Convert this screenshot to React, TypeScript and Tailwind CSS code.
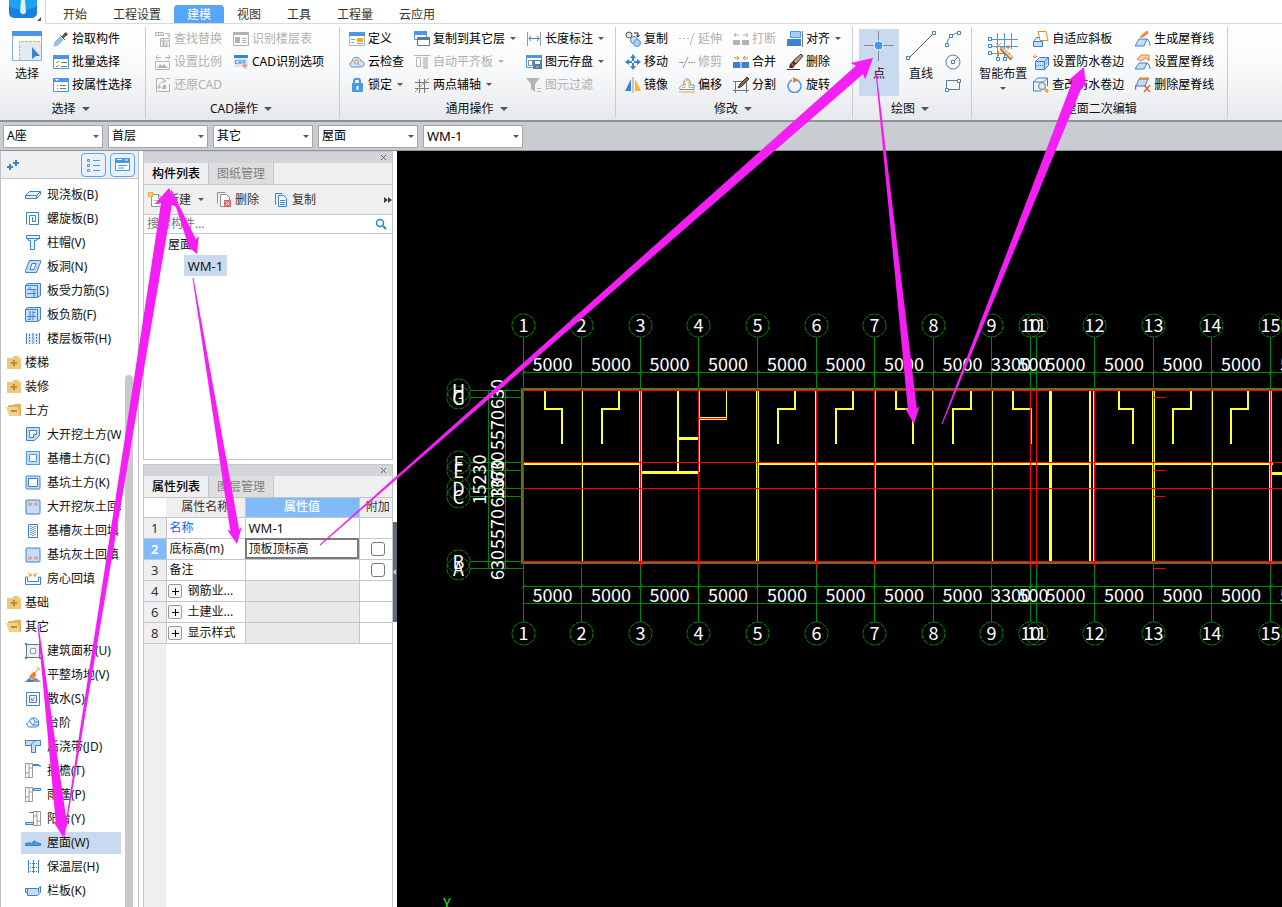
import { Fragment, useState } from 'react';
import type { ReactNode } from 'react';
import clsx from 'clsx';

const BLUE = '#3b82d0';
const SKY = '#4a96e8';
const PALE = '#c5dcf7';
const GRAY = '#b3b3b3';
const DARK = '#6b7885';
const ORANGE = '#f0842c';
const GREEN = '#008a00';
const YELLOW = '#ffff33';

const pitIcon = (marks: ReactNode) => (
  <>
    <rect x="1" y="1" width="14" height="14" rx="1" fill={PALE} stroke={BLUE} />
    {marks}
  </>
);

const icons: Record<string, ReactNode> = {
  // ribbon, select
  dropper: (
    <>
      <path d="M1 15l1-4 5-5 3 3-5 5z" fill="#8ec1f2" stroke="#9fb4c6" />
      <path d="M7 4l5 5M9 6l3-4c1-1 3 1 2 2l-4 3z" stroke="#555" fill="#555" />
    </>
  ),
  batch: (
    <>
      <path d="M.5 2h15v12.500H.5z" fill="#fff" stroke={SKY} />
      <path d="M0 1h16v4H0z" fill={SKY} />
      <path d="M3 8l1 1 2-2M3 12l1 1 2-2" stroke={ORANGE} />
      <path d="M8 8.500h6M8 12.500h6" stroke="#777" />
    </>
  ),
  property: (
    <>
      <path d="M.5 2h15v12.500H.5z" fill="#fff" stroke={SKY} />
      <path d="M0 1h16v4H0z" fill={SKY} />
      <path d="M2 2h4L4 4z" fill="#fff" />
      <path d="M4 8.500h1M4 11.500h1M7 8.500h6M7 11.500h6" stroke="#777" />
    </>
  ),
  // ribbon, CAD
  findReplace: (
    <>
      <path d="M.5 1.500h8v3h-8zM3.500 1.500v3M6 1.500v3M10 2.500h4v3M12.500 4l1.500 2 1.500-2" stroke={GRAY} />
      <path d="M5.500 7.500h9v8h-9zM5.500 10h9M7 12h6M7 14h6M8.500 7.500V15" stroke={GRAY} />
    </>
  ),
  scale: (
    <>
      <path d="M1 3.500h5M3 1L1 3.500 3 6M10 3.500h5M13 1l2 2.500L13 6" stroke={GRAY} />
      <path d="M.5 7.500h14v8H.5z" stroke={GRAY} />
      <path d="M2 14l3-4 2 2 2-2 4 4z" fill={GRAY} />
    </>
  ),
  restore: (
    <>
      <path d="M9 1.500H1.500v13h13V7" stroke={GRAY} />
      <path d="M4 11c0-5 3-7 6-7M8 2l3 2-3 2M2.500 9L4 11.500 6 9M11 1.500h4" stroke={GRAY} />
      <path d="M8 8h3v4H7z" fill={GRAY} />
    </>
  ),
  floorTable: (
    <>
      <path d="M.5 1.500h15v13H.5z" stroke={GRAY} />
      <path d="M0 1h16v3H0zM2 6h5v6H2z" fill={GRAY} />
      <path d="M9 7.500h5M9 9.500h4M9 11.500h5" stroke={GRAY} />
    </>
  ),
  cad: (
    <>
      <path d="M1 1h14v12H1z" fill="#d6e8fb" />
      <path d="M1 1h14v3H1z" fill={BLUE} />
      <path d="M4.500 6.500h-2v3h2M6 10V6.500h2V10M6 8.500h2M10 6.500h2v3h-2z" stroke={SKY} />
      <path d="M10 8l5 4-2 .5.500 2-1.500.500-1-2-1.500.500z" fill="#f69a78" />
    </>
  ),
  // ribbon, common
  define: (
    <>
      <path d="M.5 1.500h15v13H.5z" fill="#fff" stroke="#a8b4c0" />
      <path d="M0 1h16v4H0z" fill={SKY} />
      <path d="M2 8.500h4M2 11.500h3M8 12.500h6" stroke="#999" />
      <path d="M8 7h6v4H8z" fill="#f5a623" />
    </>
  ),
  cloud: (
    <>
      <path d="M4 13C0 13 0 8 3 8c0-6 8-6 9-1 4 0 4 6 0 6z" fill="#cfe3f9" stroke={SKY} />
      <circle cx="7.500" cy="8" r="2" stroke={ORANGE} />
      <path d="M9 9.500l2 2" stroke={ORANGE} />
    </>
  ),
  lock: (
    <>
      <path d="M5 7V4c0-3 6-3 6 0v3" stroke={SKY} strokeWidth="2" />
      <rect x="3" y="6" width="11" height="9" rx="1" fill={SKY} />
      <path d="M8.500 9v4" stroke="#fff" strokeWidth="2" />
    </>
  ),
  copyLayer: (
    <>
      <path d="M.5 .5h12v8H.5z" fill="#fff" stroke={SKY} />
      <path d="M0 0h13v4H0z" fill={SKY} />
      <path d="M3.500 6.500h12v8h-12z" fill="#fff" stroke={DARK} />
      <path d="M3 6h13v3H3z" fill={DARK} />
    </>
  ),
  alignSlab: (
    <>
      <path d="M0 1.500h16M2.500 3.500h4v9h-4z" stroke={GRAY} />
      <path d="M9 3h5v12H9z" fill="#ccc" />
    </>
  ),
  twoPoint: (
    <>
      <path d="M5.500 2v14M10.500 2v14M1 5.500h14M1 11.500h14" stroke={DARK} />
      <path d="M1 15L15 1" stroke={ORANGE} />
    </>
  ),
  length: (
    <>
      <path d="M1.500 1v14M14.500 1v14" stroke="#999" />
      <path d="M3 7.500h10M5 5L3 7.500 5 10M11 5l2 2.500-2 2.500" stroke={BLUE} />
    </>
  ),
  saveElement: (
    <>
      <path d="M.5 1.500h15v12H.5z" fill="#fff" stroke={SKY} />
      <path d="M0 1h16v3H0z" fill={SKY} />
      <path d="M2.500 6.500h4v5h-4z" stroke="#888" />
      <path d="M7 6h9v9H7z" fill={BLUE} />
      <path d="M9 7h5v3H9z" fill="#fff" />
      <path d="M10 12h3v2h-3z" fill={ORANGE} />
    </>
  ),
  filter: (
    <>
      <path d="M0 1h14L9 7v8l-4-3V7z" fill={GRAY} />
      <path d="M11 11.500h4M11 14.500h4" stroke={GRAY} />
    </>
  ),
  // ribbon, modify
  copy: (
    <>
      <circle cx="4" cy="4" r="3" fill="#e3e6ea" stroke="#555" />
      <circle cx="9" cy="9" r="3.500" fill="#cfe3f9" stroke={DARK} />
      <circle cx="12" cy="12" r="3.500" fill="#9fd3f7" stroke={SKY} />
      <path d="M9 2h4v3M11.500 4L13 6l1.500-2" stroke="#222" />
    </>
  ),
  move: (
    <path
      d="M8 0l3 4H9v3H7V4H5zM8 16l3-4H9V9H7v3H5zM0 8l4-3v2h3v2H4v2zM16 8l-4-3v2H9v2h3v2z"
      fill={BLUE}
    />
  ),
  mirror: (
    <>
      <path d="M6 2v12H0z" fill={BLUE} />
      <path d="M10 2v12h6z" fill="#fbb42c" />
      <path d="M8 0v16" stroke="#999" />
    </>
  ),
  extend: <path d="M0 7.500h2M4 7.500h2M8 7.500h2M11 14l4-12" stroke={GRAY} />,
  trim: <path d="M0 8.500h5M4 14L9 3M9 8.500h2M12 8.500h2M15 8.500h1" stroke="#999" />,
  offset: (
    <>
      <path d="M1 12.500C0 9 3 8 5 8c-2-8 8-8 6 0h4v4.500z" fill="#fff" stroke={SKY} />
      <path d="M3 10.500h3V5c1-2 4-2 4 0v5.500h5M0 15h16" stroke="#f5a623" />
    </>
  ),
  breakUp: (
    <>
      <path d="M0 9h7v5H0zM9 9h7v5H9z" fill={GRAY} />
      <path d="M1 4h5M3 2L1 4l2 2M10 4h5M13 2l2 2-2 2" stroke={GRAY} />
    </>
  ),
  merge: (
    <>
      <path d="M0 8h16v6H0z" fill={BLUE} />
      <path d="M8 8v6" stroke="#fff" />
      <path d="M1 4h5M4 2l2 2-2 2M15 4h-5M12 2l-2 2 2 2" stroke={ORANGE} />
    </>
  ),
  split: (
    <>
      <path d="M2.500 4.500h11v9h-11zM0 4.500h4M0 13.500h16M13.500 13v3M2.500 13v3" stroke={DARK} />
      <path d="M5 11l2-4 7-7 2 2-7 7z" fill="#8d6a4a" stroke="#333" />
    </>
  ),
  align: (
    <>
      <path d="M3.500 .5h10v6h-10z" fill="#a9cef5" stroke={SKY} />
      <path d="M0 8h14v7H0z" fill={BLUE} />
      <path d="M15.500 0v16" stroke={DARK} />
    </>
  ),
  erase: (
    <>
      <path d="M14 0l2 2-7 8-3-3z" fill="#c29a6b" stroke="#333" />
      <path d="M6 7l3 3-3 4H2l1-4z" fill="#333" />
      <path d="M4 9l3 3" stroke="#d9452c" strokeWidth="2" />
      <path d="M0 15.500h13" stroke="#333" />
    </>
  ),
  rotate: (
    <>
      <path d="M10 3a6.500 6.500 0 1 1-5 0" stroke={SKY} strokeWidth="1.500" />
      <path d="M6 0l6 3-6 3z" fill={ORANGE} />
    </>
  ),
  // ribbon, draw
  arc: (
    <>
      <path d="M1.500 15C2 8 6 3 14 1.500" stroke={DARK} />
      <path d="M.5 12.500h3v3h-3zM12.500 .5h3v3h-3zM4.500 3.500h3v3h-3z" fill="#fff" stroke={BLUE} />
    </>
  ),
  circle: (
    <>
      <circle cx="8" cy="8" r="7" stroke={DARK} />
      <path d="M8 8l5-5" stroke={BLUE} />
      <path d="M6.500 6.500h3v3h-3z" fill="#fff" stroke={BLUE} />
    </>
  ),
  rect: (
    <>
      <path d="M1.500 3.500h13v9h-13z" stroke={DARK} />
      <path d="M.5 11.500h3v3h-3zM12.500 2.500h3v3h-3z" fill="#fff" stroke={BLUE} />
    </>
  ),
  // ribbon, roof
  slope: (
    <>
      <path d="M5 .5h8l2 9H7z" fill="#fff" stroke={ORANGE} />
      <path d="M.5 10.500l3-4h3M.5 10.500h9v5h-9z" fill={PALE} stroke={BLUE} />
    </>
  ),
  setFlash: (
    <>
      <path d="M2.500 7.500l4-4h9v8l-4 4h-9z" fill={PALE} stroke={BLUE} />
      <path d="M2.500 7.500h9l4-4M11.500 7.500v8" stroke={BLUE} />
      <path d="M3 11.500h8l4-4" stroke={BLUE} strokeDasharray="1 1" />
      <path d="M2 0v4M4 2L2 4 0 2" stroke={ORANGE} />
    </>
  ),
  editFlash: (
    <>
      <path d="M.5 5l4-4h10v8M.5 5v9h8M.5 5h10l4-4" stroke={BLUE} fill="#eaf3fd" />
      <circle cx="9" cy="9" r="3.500" fill="#dcebfb" stroke={DARK} />
      <path d="M12 12l3 3" stroke="#f5a623" strokeWidth="3" />
    </>
  ),
  ridgeNew: (
    <>
      <path d="M4 8h8l-3 7H0z" fill={PALE} stroke={BLUE} />
      <path d="M5 6l7-6 1 2-5 4z" fill={ORANGE} stroke={ORANGE} />
      <path d="M12 8c2 1 3 4 3 7" stroke={BLUE} />
    </>
  ),
  ridgeSet: (
    <>
      <path d="M4 9h8l-3 6H0zM12 9c2 1 3 3 3 6" fill={PALE} stroke={BLUE} />
      <path d="M2 5l4-4h8v6l-3-3-5 3z" fill="#fbd0a8" stroke={ORANGE} />
    </>
  ),
  ridgeDel: (
    <>
      <path d="M4 2h9l-3 7H1z" fill={PALE} stroke={BLUE} />
      <path d="M4 1.500h10" stroke={ORANGE} strokeWidth="2" />
      <path d="M.5 8v5M9 8l6 7M15 8l-6 7" stroke="#d9653c" strokeWidth="1.500" />
    </>
  ),
  // component tree
  slab: <path d="M.5 8.500l4-4h11v3l-4 4H.5zM.5 8.500h11l4-4M11.500 8.500v3" fill="#eaf3fd" stroke={BLUE} />,
  spiral: <path d="M1.500 13.500V1.500h12v12H4.500V4.500h6v6H7.500V6" stroke={BLUE} />,
  cap: <path d="M1.500 .5h13v3l-3 1v1h-2v9h-4v-9h-2v-1l-2-1zM1.500 3.500h13" fill="#eaf3fd" stroke={BLUE} />,
  hole: (
    <>
      <path d="M.5 13.500v-2l4-10h11v2l-4 10z" fill={PALE} stroke={BLUE} />
      <path d="M5 10.500l2-6h4l-2 6z" fill="#fff" stroke={BLUE} />
    </>
  ),
  rebarS: (
    <>
      <path d="M.5 2.500h12v12H.5zM.5 2.500l2-2h13v12l-3 2" fill={PALE} stroke={BLUE} />
      <path d="M2 6.500h9M2 10.500h9M5 4v2M9 6v8" stroke={BLUE} />
    </>
  ),
  rebarF: (
    <>
      <path d="M.5 2.500h12v12H.5zM.5 2.500l2-2h13v12l-3 2" fill={PALE} stroke={BLUE} />
      <path d="M2 9.500h9M5 4v9M8 4v9M3 12.500h2M8 5.500h2" stroke={BLUE} />
    </>
  ),
  band: (
    <>
      <path d="M2 2h12v11H2z" fill="#dcebfb" />
      <path d="M1.500 2v11M14.500 2v11M8 2v11" stroke={DARK} />
      <path d="M4.500 3v10M11.500 3v10" stroke={BLUE} strokeDasharray="2 1" />
    </>
  ),
  dig: (
    <>
      <path d="M1.500 .5h13v8l-5 5h-8z" fill={PALE} stroke={BLUE} />
      <path d="M4.500 3.500h7v4h-3v3h-4z" fill="#fff" stroke={BLUE} />
    </>
  ),
  trench: (
    <>
      <path d="M1.500 .5h13v13h-13z" fill={PALE} stroke={SKY} />
      <path d="M4.500 3.500h7v7h-7z" fill="#fff" stroke={SKY} />
    </>
  ),
  pit: (
    <>
      <rect x="1" y="1" width="14" height="13" rx="1" fill={PALE} stroke={BLUE} />
      <path d="M3.500 3.500h9v8h-9z" fill="#fff" stroke={BLUE} />
    </>
  ),
  fillBig: pitIcon(<path d="M3 3l3 3M6 3.500V6H3.500M13 3l-3 3M10 3.500V6h2.500" stroke={ORANGE} />),
  fillTrench: (
    <>
      <path d="M3.500 1.500h9v13h-9z" fill="#fff" stroke={BLUE} />
      <path d="M6 3v10M10 3v10" stroke="#6f9fd0" strokeDasharray="1 1" strokeWidth="2" />
      <path d="M8 4v9" stroke="#6f9fd0" strokeDasharray="1 1" strokeWidth="2" />
    </>
  ),
  fillPit: pitIcon(<path d="M3 13l3-3M3.500 10H6v2.500M13 13l-3-3M12.500 10H10v2.500" stroke={ORANGE} />),
  fillRoom: (
    <>
      <path d="M.5 6v7.500h15V6h-2v4.500h-11V6z" fill="#fff" stroke={BLUE} />
      <path d="M3 2l3 3M6 2.500V5H3.500M12 2L9 5M9 2.500V5h2.500" stroke={ORANGE} />
    </>
  ),
  area: (
    <>
      <path d="M1.500 1.500h13v13h-13z" fill="#e6f0fb" stroke={DARK} />
      <path d="M5.500 5.500h5v5h-5z" fill="#fff" stroke="#999" />
      <path d="M0 0h2v2H0zM14 0h2v2h-2zM0 14h2v2H0zM14 14h2v2h-2z" fill={BLUE} />
    </>
  ),
  level: (
    <>
      <path d="M0 15l4-4 3 2 4-2 5 4z" fill={BLUE} />
      <path d="M8 15l3-3 5 3z" fill="#999" />
      <path d="M5 9l4-4 2 3-3 4-3-1z" fill={ORANGE} stroke={ORANGE} />
      <path d="M9 7l5-6M12 0l3 3" stroke={ORANGE} />
    </>
  ),
  apron: (
    <>
      <path d="M1.500 1.500h13v13h-13z" fill="#fff" stroke={BLUE} />
      <path d="M4.500 4.500h7v7h-7z" fill="#eaf3fd" stroke={BLUE} />
      <path d="M10 6l-3 3M6.500 7v2.500H9" stroke={ORANGE} />
    </>
  ),
  steps: <path d="M1.500 9l3-3 3 4h6v-4l-3-3h-4l-2 3M7.500 10l3-3-3-4M1.500 9l2 3h8l2-2M10.500 7h3" fill="#eaf3fd" stroke={BLUE} />,
  pour: (
    <>
      <path d="M.5 1.500h15v5h-5v7h-4v-7h-6z" fill={PALE} stroke={BLUE} />
      <path d="M6 6.500C7 4 9 2 11 1.500" stroke={DARK} />
    </>
  ),
  eave: (
    <>
      <path d="M.5 .5h7v14h-7zM4 .5v14M4 5h3.500M.5 10h3.500" stroke="#999" />
      <path d="M8 1h5l3 2v1l-3-1H8z" fill={BLUE} />
    </>
  ),
  canopy: (
    <>
      <path d="M.5 .5h7v14h-7zM4 .5v14M4 5h3.500M.5 10h3.500" stroke="#999" />
      <path d="M8.500 1.500h7v2h-7z" fill={PALE} stroke={BLUE} />
    </>
  ),
  balcony: (
    <>
      <path d="M8.500 .5h7v14h-7zM12 .5v14M8.500 5h3.500M12 10h3.500" stroke="#999" />
      <path d="M4 1.500h4M.5 11.500h8v2h-8z" fill={PALE} stroke={BLUE} />
    </>
  ),
  roof: <path d="M.5 10.500V8.500l4-1 2 1 3-3 2 2 4 1v2z" fill={SKY} stroke={BLUE} />,
  insulate: (
    <>
      <path d="M3.500 1v13M8.500 1v13M13.500 1v13" stroke={BLUE} />
      <path d="M3 4.500h11M3 8.500h11M3 12.500h11" stroke={BLUE} strokeDasharray="1 1" />
    </>
  ),
  board: <path d="M.5 5.500h13l2-2v6l-3 3h-10v-3h-2zM2.500 5.500v4M13.500 5.500v4" fill={PALE} stroke={BLUE} />,
  folder: (
    <>
      <path d="M1 3h6V1h6v2h2v11H1z" fill="#efc77a" />
      <path d="M8 5v6M5 8h6" stroke="#b98a30" strokeWidth="2" />
    </>
  ),
  folderOpen: (
    <>
      <path d="M2 2h6V1h7v12H3z" fill="#e3b15a" />
      <path d="M0 4h12l2 9H3z" fill="#f3d18c" />
      <path d="M5 8h6" stroke="#b98a30" strokeWidth="2" />
    </>
  ),
  // component list
  newDoc: (
    <>
      <path d="M3.500 2.500h7l4 4v8h-11zM10.500 2.500v4h4" fill="#fff" stroke="#8a939c" />
      <path d="M6 8.500h6M6 11.500h6" stroke="#bbb" />
      <path d="M0 0h5v5H0z" fill="#f9a825" />
      <path d="M1 1l3 3M4 1L1 4" stroke="#fff" />
    </>
  ),
  deleteDoc: (
    <>
      <path d="M1.500 11.500V.5h8" stroke="#8a939c" />
      <path d="M4.500 2.500h6l3 3v9h-9z" fill="#fff" stroke="#8a939c" />
      <path d="M8 8h7v7H8z" fill="#d9656a" />
      <path d="M9.500 9.500l4 4M13.500 9.500l-4 4" stroke="#fff" />
    </>
  ),
  copyDoc: (
    <>
      <path d="M2.500 12.500V1.500h7" stroke={BLUE} />
      <path d="M5.500 3.500h5l3 3v8h-8z" fill="#fff" stroke={BLUE} />
      <path d="M7 8.500h5M7 10.500h5M7 12.500h5" stroke={BLUE} />
    </>
  ),
};

const Icon = ({ name }: { name: string }) => (
  <svg className="h-4 w-4 shrink-0" viewBox="0 0 16 16" fill="none" aria-hidden="true">
    {icons[name]}
  </svg>
);

const Caret = ({ dim, wide }: { dim?: boolean; wide?: boolean }) => (
  <svg className={clsx('shrink-0', wide ? 'h-1 w-2' : 'h-[3px] w-[6px]')} viewBox="0 0 6 3" aria-hidden="true">
    <path d="M0 0h6L3 3z" fill={dim ? '#b3b3b3' : '#555'} />
  </svg>
);

type Tool = { icon: string; label: string; off?: boolean; menu?: boolean };

const ToolColumn = ({ tools }: { tools: Tool[] }) => (
  <div className="flex flex-col">
    {tools.map((tool) => (
      <button
        key={tool.label}
        disabled={tool.off}
        className="flex h-[23px] items-center whitespace-nowrap text-black disabled:text-[#b0b0b0]"
      >
        <Icon name={tool.icon} />
        <span className="ml-[3px]">{tool.label}</span>
        {tool.menu && (
          <span className="ml-[5px]">
            <Caret dim={tool.off} />
          </span>
        )}
      </button>
    ))}
  </div>
);

type GroupProps = { title: string; menu?: boolean; className: string; children: ReactNode };

const RibbonGroup = ({ title, menu = true, className, children }: GroupProps) => (
  <section className={clsx('flex shrink-0 flex-col border-r border-[#c9cbce]', className)}>
    <div className="flex h-[69px]">{children}</div>
    <button
      className={clsx('flex h-6 items-center justify-center gap-[6px] whitespace-nowrap pt-1', !menu && 'pl-2')}
    >
      {title}
      {menu && <Caret wide />}
    </button>
  </section>
);

const tabs = ['开始', '工程设置', '建模', '视图', '工具', '工程量', '云应用'];

const TabBar = () => {
  const [active, setActive] = useState('建模');
  return (
    <header className="flex h-6 bg-white">
      <button aria-label="菜单" className="w-[46px] shrink-0 border-r border-[#d4d6d9]">
        <svg className="h-6 w-[45px]" viewBox="0 0 45 24" fill="none" aria-hidden="true">
          <rect x="9" y="-10" width="28" height="28" rx="5" fill="#1a7fe0" />
          <path d="M9 0h28v6c-9 5-19 5-28 0z" fill="#1ba4f2" />
          <path d="M21 0h4l1 12c-1 3-4 3-6 0z" fill="#d8f0ff" />
          <path d="M41 17v4h-4z" fill="#555" />
        </svg>
      </button>
      <nav className="flex flex-1 border-b border-[#d9dadc] pl-1 pt-[5px]">
        {tabs.map((tab) => (
          <button
            key={tab}
            onClick={() => setActive(tab)}
            className={clsx(
              'whitespace-nowrap rounded-t-sm px-[13px] pt-px',
              tab === active ? 'bg-[#57a5f7] text-white' : 'text-[#333]',
            )}
          >
            {tab}
          </button>
        ))}
      </nav>
    </header>
  );
};

const Ribbon = () => (
  <div className="flex h-[98px] overflow-hidden border-b-2 border-[#8f9399] bg-gradient-to-b from-white via-[#f8f9fa] to-[#e6e9ec] pt-[3px] pb-[2px]">
    <RibbonGroup title="选择" className="pl-[9px] pr-[13px]">
      <button className="flex w-9 flex-col items-center pt-1">
        <svg className="h-[30px] w-[30px]" viewBox="0 0 30 30" fill="none" aria-hidden="true">
          <path d="M.5 .5h29v29H.5z" fill="#fff" stroke="#7fb0e6" />
          <path d="M0 0h30v5H0z" fill={SKY} />
          <path d="M8 11h21v18H8z" fill="#e4eaf2" />
          <path d="M7.500 29V10.500H29" stroke="#f5b022" strokeDasharray="3 1" />
          <path d="M20 16l8 9h-4l-4 3z" fill={BLUE} />
        </svg>
        <span className="mt-1">选择</span>
      </button>
      <div className="ml-2">
        <ToolColumn
          tools={[
            { icon: 'dropper', label: '拾取构件' },
            { icon: 'batch', label: '批量选择' },
            { icon: 'property', label: '按属性选择' },
          ]}
        />
      </div>
    </RibbonGroup>

    <RibbonGroup title="CAD操作" className="w-[194px] pl-[9px] pr-3">
      <div className="flex gap-[11px]">
        <ToolColumn
          tools={[
            { icon: 'findReplace', label: '查找替换', off: true },
            { icon: 'scale', label: '设置比例', off: true },
            { icon: 'restore', label: '还原CAD', off: true },
          ]}
        />
        <ToolColumn
          tools={[
            { icon: 'floorTable', label: '识别楼层表', off: true },
            { icon: 'cad', label: 'CAD识别选项' },
          ]}
        />
      </div>
    </RibbonGroup>

    <RibbonGroup title="通用操作" className="pl-[9px] pr-[11px]">
      <div className="flex gap-[10px]">
        <ToolColumn
          tools={[
            { icon: 'define', label: '定义' },
            { icon: 'cloud', label: '云检查' },
            { icon: 'lock', label: '锁定', menu: true },
          ]}
        />
        <ToolColumn
          tools={[
            { icon: 'copyLayer', label: '复制到其它层', menu: true },
            { icon: 'alignSlab', label: '自动平齐板', off: true, menu: true },
            { icon: 'twoPoint', label: '两点辅轴', menu: true },
          ]}
        />
        <ToolColumn
          tools={[
            { icon: 'length', label: '长度标注', menu: true },
            { icon: 'saveElement', label: '图元存盘', menu: true },
            { icon: 'filter', label: '图元过滤', off: true },
          ]}
        />
      </div>
    </RibbonGroup>

    <RibbonGroup title="修改" className="pl-[9px] pr-[11px]">
      <div className="flex gap-[11px]">
        <ToolColumn
          tools={[
            { icon: 'copy', label: '复制' },
            { icon: 'move', label: '移动' },
            { icon: 'mirror', label: '镜像' },
          ]}
        />
        <ToolColumn
          tools={[
            { icon: 'extend', label: '延伸', off: true },
            { icon: 'trim', label: '修剪', off: true },
            { icon: 'offset', label: '偏移' },
          ]}
        />
        <ToolColumn
          tools={[
            { icon: 'breakUp', label: '打断', off: true },
            { icon: 'merge', label: '合并' },
            { icon: 'split', label: '分割' },
          ]}
        />
        <ToolColumn
          tools={[
            { icon: 'align', label: '对齐', menu: true },
            { icon: 'erase', label: '删除' },
            { icon: 'rotate', label: '旋转' },
          ]}
        />
      </div>
    </RibbonGroup>

    <RibbonGroup title="绘图" className="pl-[6px] pr-[10px]">
      <button className="mt-[2px] flex w-10 flex-col items-center bg-[#c9daf0] pt-[2px]">
        <svg className="h-[30px] w-[30px]" viewBox="0 0 30 30" fill="none" aria-hidden="true">
          <path d="M14.500 0v30M0 14.500h30" stroke="#7f8b98" />
          <circle cx="14.500" cy="14.500" r="4.500" fill={SKY} stroke="#fff" />
        </svg>
        <span className="mt-1">点</span>
      </button>
      <button className="flex w-11 flex-col items-center pt-1">
        <svg className="h-[30px] w-[30px]" viewBox="0 0 30 30" fill="none" aria-hidden="true">
          <path d="M3 27L27 3" stroke="#555" />
          <path d="M.5 25.500h3v3h-3zM26.500 .5h3v3h-3z" fill="#fff" stroke={BLUE} />
        </svg>
        <span className="mt-1">直线</span>
      </button>
      <div className="ml-[2px] flex flex-col">
        {[
          ['arc', '弧线'],
          ['circle', '圆'],
          ['rect', '矩形'],
        ].map(([icon, label]) => (
          <button key={icon} aria-label={label} className="flex h-[23px] items-center">
            <Icon name={icon} />
          </button>
        ))}
      </div>
    </RibbonGroup>

    <RibbonGroup title="屋面二次编辑" menu={false} className="pl-[7px] pr-[13px]">
      <button className="flex w-12 flex-col items-center whitespace-nowrap pt-1">
        <svg className="h-[30px] w-[30px]" viewBox="0 0 30 30" fill="none" aria-hidden="true">
          <path d="M9.500 2v25M16.500 2v25M23.500 2v16M2 8.500h28M2 15.500h28M2 22.500h20" stroke={SKY} />
          <path d="M.5 6.500h3v3h-3zM.5 13.500h3v3h-3zM.5 20.500h3v3h-3zM8.500 26.500h3v3h-3zM15.500 26.500h3v3h-3z" fill="#fff" stroke={BLUE} />
          <path d="M13 17l11 11" stroke="#a8763e" strokeWidth="4" />
          <path d="M14 17l10 10" stroke="#f3cfa0" strokeWidth="2" />
          <path d="M8 12l5 5M13 12l-5 5M8 22.500h5M10.500 20v5M20 14v5M18 16.500h4" stroke={ORANGE} />
        </svg>
        <span className="mt-1 leading-[18px]">智能布置</span>
        <span className="mt-1">
          <Caret />
        </span>
      </button>
      <div className="ml-[6px] flex gap-[11px]">
        <ToolColumn
          tools={[
            { icon: 'slope', label: '自适应斜板' },
            { icon: 'setFlash', label: '设置防水卷边' },
            { icon: 'editFlash', label: '查改防水卷边' },
          ]}
        />
        <ToolColumn
          tools={[
            { icon: 'ridgeNew', label: '生成屋脊线' },
            { icon: 'ridgeSet', label: '设置屋脊线' },
            { icon: 'ridgeDel', label: '删除屋脊线' },
          ]}
        />
      </div>
    </RibbonGroup>
  </div>
);

const filters = [
  ['楼栋', 'A座'],
  ['楼层', '首层'],
  ['类别', '其它'],
  ['构件类型', '屋面'],
  ['构件', 'WM-1'],
];

const FilterBar = () => (
  <div className="flex h-[29px] items-center gap-[5px] border-b border-[#8f9399] bg-[#c9ccd1] px-[3px]">
    {filters.map(([label, value]) => (
      <div key={label} className="grid w-[100px] grid-cols-1 items-center">
        <select
          aria-label={label}
          className={clsx(
            'col-start-1 row-start-1 h-[23px] appearance-none border border-[#a5a7ab] bg-white pl-[3px] text-black',
            label === '构件' && 'text-[13px]',
          )}
        >
          <option>{value}</option>
        </select>
        <span className="pointer-events-none col-start-1 row-start-1 flex justify-end pr-1">
          <Caret />
        </span>
      </div>
    ))}
  </div>
);

type Node = { icon: string; label: string; group?: boolean };

const tree: Node[] = [
  { icon: 'slab', label: '现浇板(B)' },
  { icon: 'spiral', label: '螺旋板(B)' },
  { icon: 'cap', label: '柱帽(V)' },
  { icon: 'hole', label: '板洞(N)' },
  { icon: 'rebarS', label: '板受力筋(S)' },
  { icon: 'rebarF', label: '板负筋(F)' },
  { icon: 'band', label: '楼层板带(H)' },
  { icon: 'folder', label: '楼梯', group: true },
  { icon: 'folder', label: '装修', group: true },
  { icon: 'folderOpen', label: '土方', group: true },
  { icon: 'dig', label: '大开挖土方(W)' },
  { icon: 'trench', label: '基槽土方(C)' },
  { icon: 'pit', label: '基坑土方(K)' },
  { icon: 'fillBig', label: '大开挖灰土回填' },
  { icon: 'fillTrench', label: '基槽灰土回填' },
  { icon: 'fillPit', label: '基坑灰土回填' },
  { icon: 'fillRoom', label: '房心回填' },
  { icon: 'folder', label: '基础', group: true },
  { icon: 'folderOpen', label: '其它', group: true },
  { icon: 'area', label: '建筑面积(U)' },
  { icon: 'level', label: '平整场地(V)' },
  { icon: 'apron', label: '散水(S)' },
  { icon: 'steps', label: '台阶' },
  { icon: 'pour', label: '后浇带(JD)' },
  { icon: 'eave', label: '挑檐(T)' },
  { icon: 'canopy', label: '雨蓬(P)' },
  { icon: 'balcony', label: '阳台(Y)' },
  { icon: 'roof', label: '屋面(W)' },
  { icon: 'insulate', label: '保温层(H)' },
  { icon: 'board', label: '栏板(K)' },
];

const Sidebar = () => {
  const [current, setCurrent] = useState('屋面(W)');
  return (
    <aside className="flex w-[139px] shrink-0 flex-col border-x border-[#bfc1c6] bg-white">
      <div className="flex h-7 items-center border-b border-[#c4c6cb] bg-[#efefef]">
        <button aria-label="展开" className="ml-[6px]">
          <svg className="h-3 w-3" viewBox="0 0 12 12" fill="none" aria-hidden="true">
            <path d="M3 5v6M0 8h6M9 1v6M6 4h6" stroke={BLUE} strokeWidth="2" />
          </svg>
        </button>
        <button aria-label="列表" className="ml-auto rounded-sm border border-[#57a5f7] bg-[#e8f2fd] px-[3px] py-[2px]">
          <svg className="h-[18px] w-[17px]" viewBox="0 0 17 18" fill="none" aria-hidden="true">
            <path d="M2.500 3.500h2v2h-2zM2.500 8.500h2v2h-2zM2.500 13.500h2v2h-2zM8 4.500h7M8 9.500h7M8 14.500h7" stroke={SKY} />
          </svg>
        </button>
        <button aria-label="卡片" className="ml-1 mr-[3px] rounded-sm border border-[#57a5f7] bg-[#e8f2fd] px-[3px] py-[2px]">
          <svg className="h-[18px] w-[17px]" viewBox="0 0 17 18" fill="none" aria-hidden="true">
            <path d="M1.500 2.500h14v12h-14z" fill="#fff" stroke={SKY} />
            <path d="M1 2h15v5H1z" fill={SKY} />
            <path d="M3 3.500h5M11 4h3" stroke="#fff" />
            <path d="M4 9.500h9M4 12h6" stroke={SKY} />
          </svg>
        </button>
      </div>
      <div className="flex flex-1">
        <ul className="min-w-0 flex-1 pt-1">
          {tree.map((node) => (
            <li key={node.label} className={clsx('flex h-6 items-center', node.group ? 'pl-[5px]' : 'pl-5')}>
              <button
                onClick={() => setCurrent(node.label)}
                className={clsx(
                  'flex h-[22px] w-[100px] items-center overflow-hidden whitespace-nowrap',
                  node.group ? 'gap-[3px]' : 'gap-[6px] pl-1',
                  node.label === current && 'bg-[#c9daf0]',
                )}
              >
                <Icon name={node.icon} />
                {node.label}
              </button>
            </li>
          ))}
        </ul>
        <div className="mr-[5px] flex w-2 pt-[196px]">
          <div className="flex-1 rounded-t-full bg-[#c9c9c9]" />
        </div>
      </div>
    </aside>
  );
};

const PanelHead = ({ names }: { names: string[] }) => (
  <>
    <div className="flex h-[11px] items-center justify-end bg-[#d3d4d9] pr-[5px]">
      <button aria-label="关闭">
        <svg className="h-[7px] w-[7px]" viewBox="0 0 7 7" fill="none" aria-hidden="true">
          <path d="M1 1l5 5M6 1L1 6" stroke="#666" />
        </svg>
      </button>
    </div>
    <div className="flex h-[22px] border-b border-[#c4c6cb] bg-[#efefef]">
      {names.map((name, i) => (
        <button
          key={name}
          className={clsx(
            'w-[65px] border-r border-[#c4c6cb]',
            i === 0 ? 'font-medium text-black' : 'bg-[#dedede] text-[#808080]',
          )}
        >
          {name}
        </button>
      ))}
    </div>
  </>
);

const ComponentPanel = () => (
  <section className="flex h-[309px] flex-col border border-[#c4c6cb] bg-white">
    <PanelHead names={['构件列表', '图纸管理']} />
    <div className="flex h-[30px] items-center border-b border-[#c4c6cb] bg-[#efefef] pl-1 text-[#333]">
      <button className="flex items-center gap-[3px]">
        <Icon name="newDoc" />
        新建
      </button>
      <span className="ml-[7px]">
        <Caret />
      </span>
      <button className="ml-3 flex items-center gap-[3px]">
        <Icon name="deleteDoc" />
        删除
      </button>
      <button className="ml-[14px] flex items-center gap-[3px]">
        <Icon name="copyDoc" />
        复制
      </button>
      <button aria-label="更多" className="ml-auto">
        <svg className="h-[6px] w-2" viewBox="0 0 8 6" aria-hidden="true">
          <path d="M0 0l4 3-4 3zM4 0l4 3-4 3z" fill="#444" />
        </svg>
      </button>
    </div>
    <label className="flex h-[19px] items-center border-b border-[#c4c6cb] pl-[3px] pr-[5px]">
      <input
        aria-label="搜索构件"
        placeholder="搜索构件..."
        className="min-w-0 flex-1 outline-none placeholder:text-[#777]"
      />
      <svg className="h-3 w-3" viewBox="0 0 12 12" fill="none" aria-hidden="true">
        <circle cx="5" cy="5" r="3.500" stroke="#2489c5" strokeWidth="1.500" />
        <path d="M8 8l3 3" stroke="#2489c5" strokeWidth="2" />
      </svg>
    </label>
    <div className="flex items-center gap-[6px] pl-[10px]">
      <svg className="h-2 w-2" viewBox="0 0 8 8" aria-hidden="true">
        <path d="M7 1v6H1z" fill="#444" />
      </svg>
      <span className="leading-[21px]">屋面</span>
    </div>
    <button className="ml-10 h-[21px] w-[43px] bg-[#c9daf0] text-[13px]">WM-1</button>
  </section>
);

const rows = [
  { no: 1, name: '名称', value: 'WM-1' },
  { no: 2, name: '底标高(m)', value: '顶板顶标高', extra: true },
  { no: 3, name: '备注', value: '', extra: true },
  { no: 4, name: '钢筋业...' },
  { no: 6, name: '土建业...' },
  { no: 8, name: '显示样式' },
];

const PropertyPanel = () => (
  <section className="mt-1 flex flex-1 flex-col border border-b-0 border-[#c4c6cb]">
    <PanelHead names={['属性列表', '图层管理']} />
    <table className="w-full table-fixed border-collapse bg-white text-left">
      <thead>
        <tr className="h-[19px] bg-[#efefef] text-center text-[#333]">
          <th aria-label="序号" className="w-[22px] border-b border-[#c4c6cb] bg-white" />
          <th className="w-[79px] border-b border-r border-[#c4c6cb] font-normal">属性名称</th>
          <th className="w-[114px] border-b border-r border-[#c4c6cb] bg-[#80baf9] font-medium text-white">属性值</th>
          <th className="whitespace-nowrap border-b border-[#c4c6cb] pl-1 font-normal">附加</th>
        </tr>
      </thead>
      <tbody>
        {rows.map(({ no, name, value, extra }) => (
          <tr key={no} className="h-[21px]">
            <td
              className={clsx(
                'border-b border-r border-[#c4c6cb] text-center text-[13px]',
                no === 2 ? 'bg-[#80baf9] font-semibold text-white' : 'bg-[#efefef] text-[#333]',
              )}
            >
              {no}
            </td>
            <td
              className={clsx(
                'border-b border-r border-[#c4c6cb]',
                value === undefined ? 'pl-px' : 'pl-[3px]',
                no === 1 && 'text-[#1a5cff]',
              )}
            >
              {value === undefined ? (
                <div className="flex items-center gap-[6px] whitespace-nowrap">
                  <button
                    aria-label="展开"
                    className="flex h-[14px] w-[14px] items-center justify-center rounded-[2px] border border-[#999] bg-[#f5f5f5]"
                  >
                    <svg className="h-2 w-2" viewBox="0 0 8 8" fill="none" aria-hidden="true">
                      <path d="M4.500 1v7M1 4.500h7" stroke="#000" />
                    </svg>
                  </button>
                  {name}
                </div>
              ) : (
                name
              )}
            </td>
            <td
              className={clsx(
                'border-b border-r border-[#c4c6cb] pl-[3px]',
                value === undefined && 'bg-[#e9e9e9]',
                no === 1 && 'text-[13px]',
                no === 2 && 'outline-2 -outline-offset-2 outline-[#7a7a7a]',
              )}
            >
              {value}
            </td>
            <td className="border-b border-[#c4c6cb]">
              {extra && (
                <input
                  type="checkbox"
                  aria-label={`${name} 附加`}
                  className="ml-auto mr-[7px] block h-[14px] w-[14px] appearance-none rounded-[3px] border border-[#777] bg-white"
                />
              )}
            </td>
          </tr>
        ))}
      </tbody>
    </table>
    <div className="flex flex-1 bg-white">
      <div className="w-[22px] bg-[#efefef]" />
    </div>
  </section>
);

const axes: [string, number][] = [
  ['1', 523.5],
  ['2', 581.5],
  ['3', 640.5],
  ['4', 698.5],
  ['5', 757.5],
  ['6', 816.5],
  ['7', 874.5],
  ['8', 933.5],
  ['9', 991.5],
  ['10', 1030.5],
  ['11', 1036.5],
  ['12', 1094.5],
  ['13', 1153.5],
  ['14', 1211.5],
  ['15', 1270.5],
  ['16', 1329.5],
];

const spans: Record<string, string> = { '9': '3300', '10': '500' };

const levels: [string, number][] = [
  ['H', 390.5],
  ['G', 397.5],
  ['F', 462.5],
  ['E', 470.5],
  ['D', 488.5],
  ['C', 496.5],
  ['B', 561.5],
  ['A', 568.5],
];

const levelSpans = ['630', '5570', '630', '1370', '630', '5570', '630'];

// walls that run beside an axis: x, bottom
const thinWalls = [
  [582.5, 561], [639.5, 561], [641.5, 561], [699.5, 472], [756.5, 561], [758.5, 561],
  [815.5, 561], [875.5, 561], [932.5, 561], [992.5, 561], [1093.5, 561], [1152.5, 561],
  [1154.5, 561], [1212.5, 561], [1269.5, 561], [1271.5, 561], [726.5, 419],
];

// stepped partitions: upper x, lower x
const partitions = [
  [545, 562], [619, 602], [795, 778], [853, 836], [896, 913],
  [971, 953], [1013, 1031], [1119, 1133], [1191, 1173], [1248, 1231],
];

const Drawing = () => (
  <main className="flex-1 overflow-hidden bg-black">
    <svg
      className="h-[756px] w-[885px] font-['Noto_Sans_CJK_SC',sans-serif]"
      viewBox="397 151 885 756"
      fill="none"
      fontSize="18"
      textAnchor="middle"
    >
      <g stroke="#6d6d1c" strokeWidth="3">
        <path d="M521 389.500H1282M521 562.500H1282M522.500 389V563" />
      </g>

      <g stroke={GREEN}>
        {axes.map(([name, x]) => (
          <Fragment key={name}>
            <circle cx={x} cy="325.500" r="11.500" strokeDasharray="5 1" />
            <circle cx={x} cy="633.500" r="11.500" strokeDasharray="5 1" />
            <path d={`M${x} 337V390M${x} 568V622M${x - 2} 374.500l4-4M${x - 2} 588.500l4-4`} />
          </Fragment>
        ))}
        {levels.map(([name, y]) => (
          <Fragment key={name}>
            <circle cx="458.500" cy={y} r="11.500" strokeDasharray="5 1" />
            <path d={`M470 ${y}H523M504 ${y + 2}l4-4`} />
          </Fragment>
        ))}
        <path d="M523 372.500H1282M523 586.500H1282M523 603.500H1282M488.500 390V569M505.500 390V569" />
      </g>

      <g stroke={YELLOW}>
        {thinWalls.map(([x, bottom]) => (
          <path key={x} d={`M${x} 391V${bottom}`} />
        ))}
        {partitions.map(([top, bottom]) => (
          <path key={top} d={`M${top} 391V409H${bottom}V444`} strokeWidth="2" />
        ))}
        <path d="M523 464H640M757 464H1090M1094 464H1273M678 391V473M1090 391V561" strokeWidth="2" />
        <path d="M1050.500 391V561M678 438.500H698M641 472.500H698M1272 473.500H1282" strokeWidth="3" />
        <path d="M699 417.500H727M699 419.500H727" />
      </g>

      <g stroke="#ff0000">
        {axes.map(([name, x]) => (
          <path key={name} d={`M${x} 390V568`} strokeOpacity={['2', '9'].includes(name) ? 0.5 : 1} />
        ))}
        <path d="M523 390.500H1282M523 462.500H1282M523 488.500H1282M523 561.500H1282M699 418.500H727" />
        <path d="M1154 397.500h11M1154 470.500h11M1154 496.500h11M1154 568.500h11" />
      </g>

      <g fill="#fff">
        {axes.map(([name, x], i) => (
          <Fragment key={name}>
            <text x={x} y="332">{name}</text>
            <text x={x} y="640">{name}</text>
            {i < axes.length - 1 && (
              <>
                <text x={(x + axes[i + 1][1]) / 2} y="371">{spans[name] ?? '5000'}</text>
                <text x={(x + axes[i + 1][1]) / 2} y="602">{spans[name] ?? '5000'}</text>
              </>
            )}
          </Fragment>
        ))}
        {levels.map(([name, y], i) => (
          <Fragment key={name}>
            <text x="458.500" y={y + 7}>{name}</text>
            {i < levels.length - 1 && (
              <text transform={`translate(504 ${(y + levels[i + 1][1]) / 2}) rotate(-90)`}>{levelSpans[i]}</text>
            )}
          </Fragment>
        ))}
        <text transform="translate(486 479.500) rotate(-90)">15230</text>
      </g>
      <text x="447" y="909" fontSize="14" fill="#00ff00">Y</text>
    </svg>
  </main>
);

// x1, y1, x2, y2, shaft width at the head, head width, head length
const arrows = [
  [38, 625, 63, 837, 11, 16, 17],
  [64, 837, 169, 188, 11, 23, 18],
  [171, 190, 197, 254, 9, 17, 16],
  [193, 278, 237, 544, 9, 15, 16],
  [320, 545, 873, 58, 11, 22, 20],
  [876, 72, 914, 424, 9, 15, 17],
  [942, 424, 1084, 67, 11, 20, 19],
];

const arrowPoints = ([x1, y1, x2, y2, shaft, head, length]: number[]) => {
  const size = Math.hypot(x2 - x1, y2 - y1);
  const ux = (x2 - x1) / size;
  const uy = (y2 - y1) / size;
  const at = (back: number, side: number) => `${x2 - ux * back - uy * side},${y2 - uy * back + ux * side}`;
  return [
    at(size, 0.5),
    at(length - 2, shaft / 2),
    at(length, head / 2),
    at(0, 0),
    at(length, -head / 2),
    at(length - 2, -shaft / 2),
    at(size, -0.5),
  ].join(' ');
};

const Arrows = () => (
  <svg
    className="pointer-events-none absolute left-0 top-0 h-[907px] w-[1282px]"
    viewBox="0 0 1282 907"
    fill="#f51ef5"
    aria-hidden="true"
  >
    {arrows.map((arrow) => (
      <polygon key={arrow.join()} points={arrowPoints(arrow)} />
    ))}
  </svg>
);

const App = () => (
  <div className="relative flex min-h-screen flex-col overflow-hidden bg-white font-['Noto_Sans','Noto_Sans_CJK_SC',sans-serif] text-[12px] leading-[18px] text-[#111]">
    <TabBar />
    <Ribbon />
    <FilterBar />
    <div className="flex flex-1">
      <Sidebar />
      <div className="ml-1 flex w-[250px] shrink-0 flex-col">
        <ComponentPanel />
        <PropertyPanel />
      </div>
      <div className="w-1 shrink-0 pt-[371px]">
        <button aria-label="收起" className="flex h-[100px] w-1 items-center bg-[#5f6c77]">
          <svg className="h-[6px] w-[3px]" viewBox="0 0 3 6" aria-hidden="true">
            <path d="M3 0v6L0 3z" fill="#cfd4d8" />
          </svg>
        </button>
      </div>
      <Drawing />
    </div>
    <Arrows />
  </div>
);

export default App;
